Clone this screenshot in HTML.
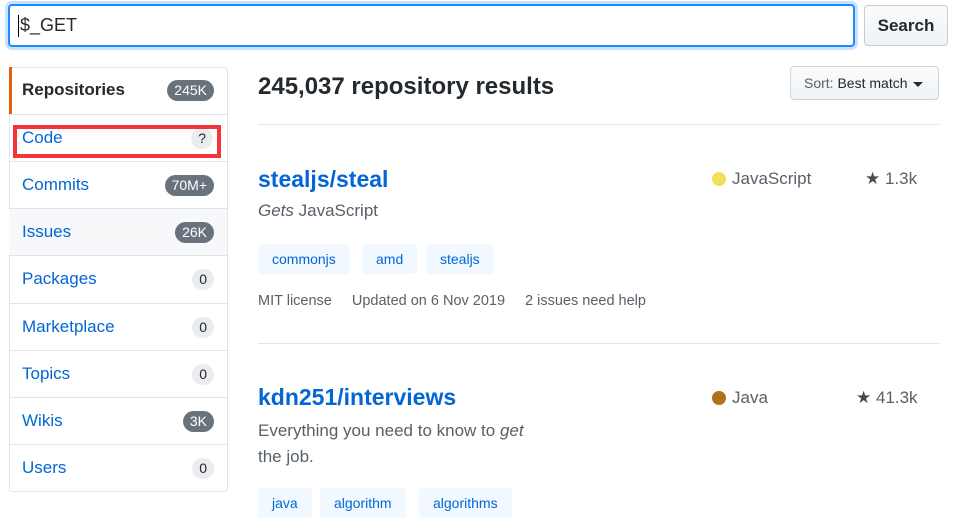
<!DOCTYPE html>
<html><head><style>
*{box-sizing:border-box;margin:0;padding:0}
body{width:967px;height:504px;overflow:hidden;background:#fff;font-family:"Liberation Sans",sans-serif;color:#24292e;position:relative}
.a{position:absolute;white-space:nowrap}
.row{position:absolute;left:9px;width:218px;height:47px;border-top:1px solid #e1e4e8;font-size:17px;color:#0366d6;line-height:46px;padding-left:13px}
.cnt{position:absolute;right:13px;top:13px;height:21px;line-height:21px;border-radius:11px;background:#6a737d;color:#fff;font-size:14px;padding:0 7px}
.cnt.l{background:#eaecef;color:#24292e}
.tag{position:absolute;top:0;height:30px;line-height:30px;background:#f1f8ff;color:#0366d6;font-size:14px;border-radius:4px;padding:0 14px}
.title{font-size:23px;font-weight:bold;color:#0366d6}
.meta{font-size:14.5px;color:#586069}
</style></head><body>
<div class="a" style="left:8px;top:4px;width:847px;height:43px;border:2px solid #2188ff;border-radius:4px;box-shadow:0 0 0 3px #c8e1ff;font-size:18px;line-height:39px;padding-left:10px">$_GET</div>
<div class="a" style="left:18px;top:15px;width:1px;height:22px;background:#000"></div>
<div class="a" style="left:864px;top:5px;width:84px;height:41px;border:1px solid #ccc;border-radius:4px;background:linear-gradient(#fafbfc,#eff3f6);font-size:17px;font-weight:bold;line-height:39px;text-align:center">Search</div>

<div class="a" style="left:9px;top:67px;width:219px;height:425px;border:1px solid #e1e4e8;border-radius:4px"></div>
<div class="row" style="top:67px;border-top:none;color:#24292e;font-weight:bold;border-left:3px solid #e36209;padding-left:10px">Repositories<span class="cnt" style="font-weight:normal">245K</span></div>
<div class="row" style="top:114px">Code<span class="cnt l" style="right:14px">?</span></div>
<div class="row" style="top:161px">Commits<span class="cnt">70M+</span></div>
<div class="row" style="top:208px;background:#f6f8fa">Issues<span class="cnt">26K</span></div>
<div class="row" style="top:255px">Packages<span class="cnt l">0</span></div>
<div class="row" style="top:303px">Marketplace<span class="cnt l">0</span></div>
<div class="row" style="top:350px">Topics<span class="cnt l">0</span></div>
<div class="row" style="top:397px">Wikis<span class="cnt">3K</span></div>
<div class="row" style="top:444px">Users<span class="cnt l">0</span></div>
<div class="a" style="left:13px;top:125px;width:208px;height:33px;border:4px solid #f5333a"></div>

<div class="a" style="left:258px;top:72px;font-size:24px;font-weight:bold;line-height:30px">245,037 repository results</div>
<div class="a" style="left:790px;top:66px;width:149px;height:34px;border:1px solid #d1d5da;border-radius:4px;background:linear-gradient(#fafbfc,#eff3f6);font-size:14px;line-height:32px;padding-left:13px"><span style="color:#586069">Sort:</span> Best match <span style="display:inline-block;border:5px solid transparent;border-top-color:#24292e;border-bottom:0;vertical-align:middle;margin-left:2px"></span></div>
<div class="a" style="left:258px;top:124px;width:681px;height:1px;background:#e1e4e8"></div>

<div class="a title" style="left:258px;top:166px">stealjs/steal</div>
<div class="a" style="left:258px;top:201px;font-size:17px;color:#586069"><i>Gets</i> JavaScript</div>
<div class="a" style="left:258px;top:244px"><span class="tag" style="left:0">commonjs</span><span class="tag" style="left:104px">amd</span><span class="tag" style="left:168px">stealjs</span></div>
<div class="a meta" style="left:258px;top:293px">MIT license<span style="margin-left:20px">Updated on 6 Nov 2019</span><span style="margin-left:20px">2 issues need help</span></div>
<div class="a" style="left:712px;top:172px;width:14px;height:14px;border-radius:50%;background:#f1e05a"></div>
<div class="a" style="left:732px;top:169px;font-size:17px;color:#586069">JavaScript</div>
<div class="a" style="left:865px;top:169px;font-size:17px;color:#586069"><span style="color:#444d56">★</span> 1.3k</div>
<div class="a" style="left:258px;top:343px;width:681px;height:1px;background:#e1e4e8"></div>

<div class="a title" style="left:258px;top:384px">kdn251/interviews</div>
<div class="a" style="left:258px;top:418px;font-size:17px;color:#586069;line-height:26px">Everything you need to know to <i>get</i><br>the job.</div>
<div class="a" style="left:258px;top:488px"><span class="tag" style="left:0">java</span><span class="tag" style="left:62px">algorithm</span><span class="tag" style="left:161px">algorithms</span></div>
<div class="a" style="left:712px;top:391px;width:14px;height:14px;border-radius:50%;background:#b07219"></div>
<div class="a" style="left:732px;top:388px;font-size:17px;color:#586069">Java</div>
<div class="a" style="left:856px;top:388px;font-size:17px;color:#586069"><span style="color:#444d56">★</span> 41.3k</div>
</body></html>
